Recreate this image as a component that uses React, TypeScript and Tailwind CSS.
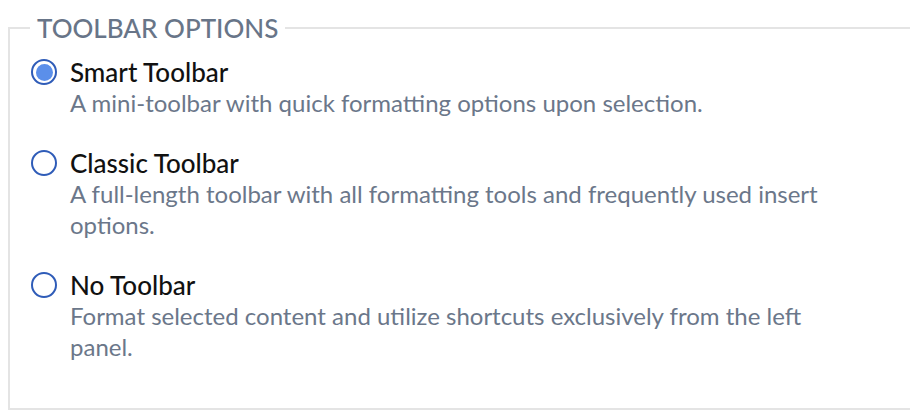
import { useState } from 'react';

const OPTIONS = [
  {
    id: 'smart',
    title: 'Smart Toolbar',
    desc: 'A mini-toolbar with quick formatting options upon selection.',
  },
  {
    id: 'classic',
    title: 'Classic Toolbar',
    desc: 'A full-length toolbar with all formatting tools and frequently used insert options.',
  },
  {
    id: 'none',
    title: 'No Toolbar',
    desc: 'Format selected content and utilize shortcuts exclusively from the left panel.',
  },
];

export default function App() {
  const [selected, setSelected] = useState('smart');

  return (
    <div className="w-[910px] h-[420px] overflow-hidden bg-white pt-3 font-['Lato','Liberation_Sans',sans-serif]">
      <fieldset className="ml-2 w-[930px] border-2 border-[#e4e4e4] pt-[13px] pb-[46px]">
        <legend className="ml-5 px-[7px] text-[26px] font-medium leading-8 text-[#687588]">
          TOOLBAR OPTIONS
        </legend>

        <div className="flex flex-col gap-[30px] pl-[21px]">
          {OPTIONS.map((opt) => {
            const checked = selected === opt.id;
            return (
              <label
                key={opt.id}
                className="flex items-start gap-[13px] cursor-pointer"
                onClick={() => setSelected(opt.id)}
              >
                <span className="mt-[2px] flex h-[26px] w-[26px] shrink-0 items-center justify-center rounded-full border-2 border-[#2f5cb8] bg-white">
                  {checked && <span className="h-[17px] w-[17px] rounded-full bg-[#5b8fea]" />}
                </span>
                <div>
                  <div className="text-[26px] font-medium leading-[30px] text-[#111]">{opt.title}</div>
                  <p className="max-w-[775px] text-[24px] leading-[31px] text-[#6b778a]">{opt.desc}</p>
                </div>
              </label>
            );
          })}
        </div>
      </fieldset>
    </div>
  );
}
